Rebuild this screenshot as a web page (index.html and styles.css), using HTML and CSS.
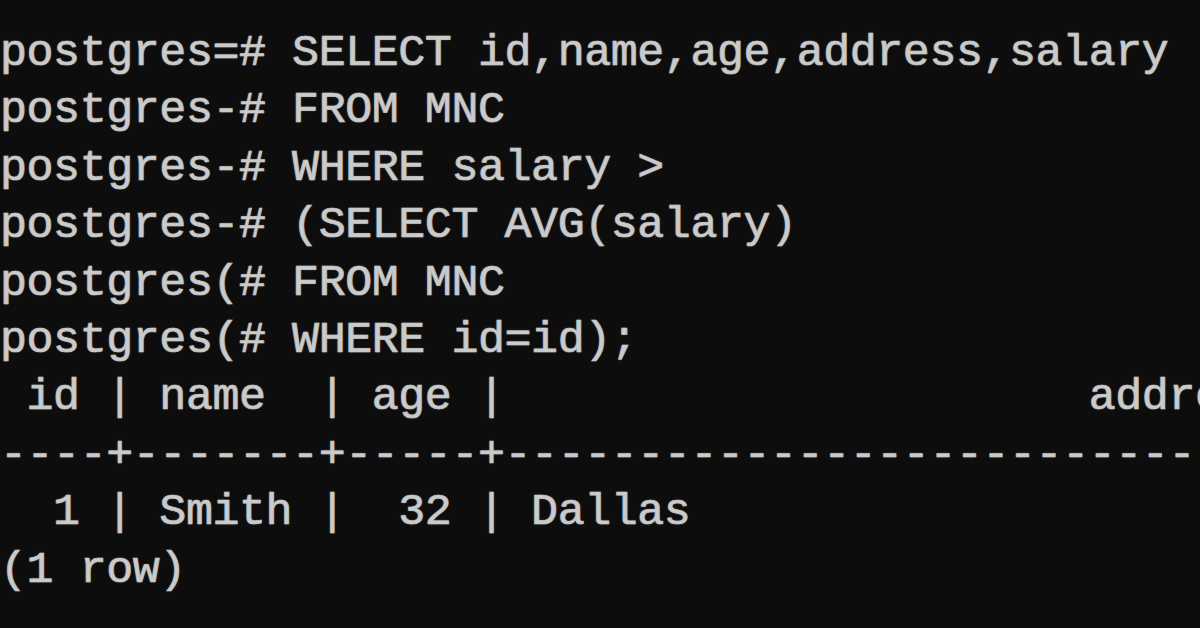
FILE: index.html
```html
<!DOCTYPE html>
<html>
<head>
<meta charset="utf-8">
<link rel="stylesheet" href="styles.css">
</head>
<body>
<div class="console">
<pre class="screen">postgres=# SELECT id,name,age,address,salary
postgres-# FROM MNC
postgres-# WHERE salary &gt;
postgres-# (SELECT AVG(salary)
postgres(# FROM MNC
postgres(# WHERE id=id);
 id | name  | age |                      address                      | salary
----+-------+-----+---------------------------------------------------+--------
  1 | Smith |  32 | Dallas                                            |  50000
(1 row)</pre>
</div>
</body>
</html>
```
FILE: styles.css
```css
html, body {
  margin: 0;
  padding: 0;
  background: #0d0d0d;
  width: 1200px;
  height: 628px;
  overflow: hidden;
}
.console {
  width: 1200px;
  height: 628px;
  overflow: hidden;
  padding-top: 25px;
  box-sizing: border-box;
}
.screen {
  margin: 0;
  font-family: "Liberation Mono", "DejaVu Sans Mono", monospace;
  font-size: 45px;
  letter-spacing: -0.45px;
  line-height: 57.4px;
  color: #cbcbcb;
  white-space: pre;
  -webkit-text-stroke: 0.7px #c4c4c4;
  text-shadow: 0 0 2px rgba(190, 190, 190, 0.55);
}
```
